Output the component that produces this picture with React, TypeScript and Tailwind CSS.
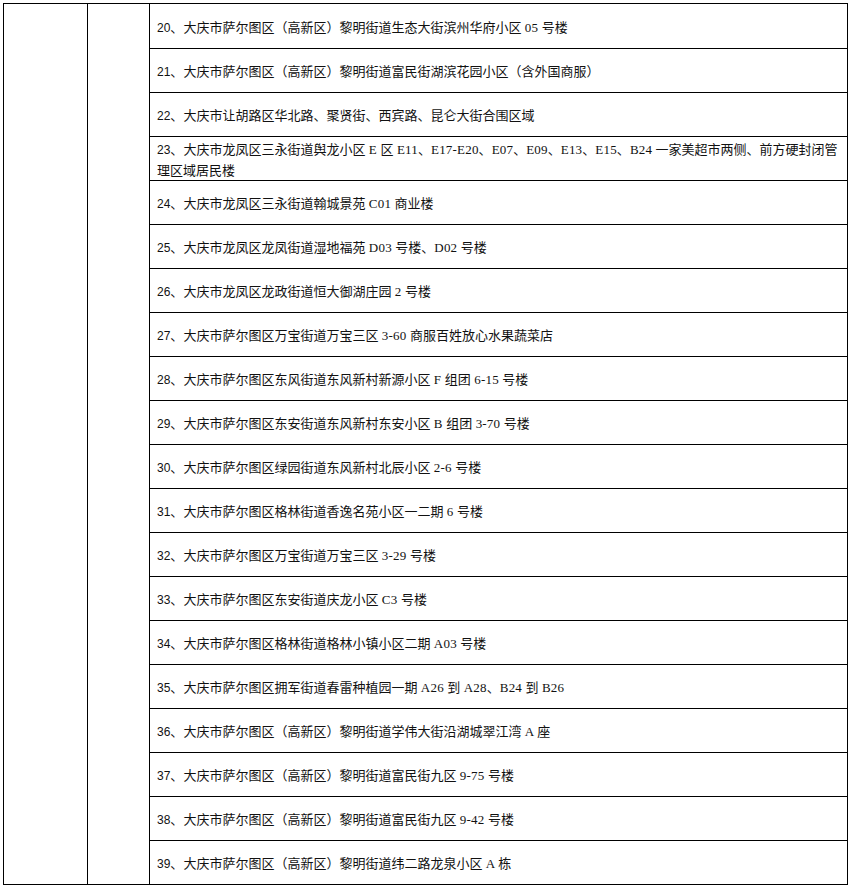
import React from "react";

type Seg = { t: string; l?: boolean };

const rows: { n: string; segs: Seg[] }[] = [
  { n: "20", segs: [{ t: "大庆市萨尔图区（高新区）黎明街道生态大街滨州华府小区" }, { t: " 05 ", l: true }, { t: "号楼" }] },
  { n: "21", segs: [{ t: "大庆市萨尔图区（高新区）黎明街道富民街湖滨花园小区（含外国商服）" }] },
  { n: "22", segs: [{ t: "大庆市让胡路区华北路、聚贤街、西宾路、昆仑大街合围区域" }] },
  {
    n: "23",
    segs: [
      { t: "大庆市龙凤区三永街道舆龙小区" },
      { t: " E ", l: true },
      { t: "区" },
      { t: " E11", l: true },
      { t: "、" },
      { t: "E17-E20", l: true },
      { t: "、" },
      { t: "E07", l: true },
      { t: "、" },
      { t: "E09", l: true },
      { t: "、" },
      { t: "E13", l: true },
      { t: "、" },
      { t: "E15", l: true },
      { t: "、" },
      { t: "B24 ", l: true },
      { t: "一家美超市两侧、前方硬封闭管" },
      { t: "\n" },
      { t: "理区域居民楼" },
    ],
  },
  { n: "24", segs: [{ t: "大庆市龙凤区三永街道翰城景苑" }, { t: " C01 ", l: true }, { t: "商业楼" }] },
  { n: "25", segs: [{ t: "大庆市龙凤区龙凤街道湿地福苑" }, { t: " D03 ", l: true }, { t: "号楼、" }, { t: "D02 ", l: true }, { t: "号楼" }] },
  { n: "26", segs: [{ t: "大庆市龙凤区龙政街道恒大御湖庄园" }, { t: " 2 ", l: true }, { t: "号楼" }] },
  { n: "27", segs: [{ t: "大庆市萨尔图区万宝街道万宝三区" }, { t: " 3-60 ", l: true }, { t: "商服百姓放心水果蔬菜店" }] },
  { n: "28", segs: [{ t: "大庆市萨尔图区东风街道东风新村新源小区" }, { t: " F ", l: true }, { t: "组团" }, { t: " 6-15 ", l: true }, { t: "号楼" }] },
  { n: "29", segs: [{ t: "大庆市萨尔图区东安街道东风新村东安小区" }, { t: " B ", l: true }, { t: "组团" }, { t: " 3-70 ", l: true }, { t: "号楼" }] },
  { n: "30", segs: [{ t: "大庆市萨尔图区绿园街道东风新村北辰小区" }, { t: " 2-6 ", l: true }, { t: "号楼" }] },
  { n: "31", segs: [{ t: "大庆市萨尔图区格林街道香逸名苑小区一二期" }, { t: " 6 ", l: true }, { t: "号楼" }] },
  { n: "32", segs: [{ t: "大庆市萨尔图区万宝街道万宝三区" }, { t: " 3-29 ", l: true }, { t: "号楼" }] },
  { n: "33", segs: [{ t: "大庆市萨尔图区东安街道庆龙小区" }, { t: " C3 ", l: true }, { t: "号楼" }] },
  { n: "34", segs: [{ t: "大庆市萨尔图区格林街道格林小镇小区二期" }, { t: " A03 ", l: true }, { t: "号楼" }] },
  {
    n: "35",
    segs: [
      { t: "大庆市萨尔图区拥军街道春雷种植园一期" },
      { t: " A26 ", l: true },
      { t: "到" },
      { t: " A28", l: true },
      { t: "、" },
      { t: "B24 ", l: true },
      { t: "到" },
      { t: " B26", l: true },
    ],
  },
  { n: "36", segs: [{ t: "大庆市萨尔图区（高新区）黎明街道学伟大街沿湖城翠江湾" }, { t: " A ", l: true }, { t: "座" }] },
  { n: "37", segs: [{ t: "大庆市萨尔图区（高新区）黎明街道富民街九区" }, { t: " 9-75 ", l: true }, { t: "号楼" }] },
  { n: "38", segs: [{ t: "大庆市萨尔图区（高新区）黎明街道富民街九区" }, { t: " 9-42 ", l: true }, { t: "号楼" }] },
  { n: "39", segs: [{ t: "大庆市萨尔图区（高新区）黎明街道纬二路龙泉小区" }, { t: " A ", l: true }, { t: "栋" }] },
];

export default function App() {
  return (
    <div className="w-[852px] h-[891px] bg-white pt-[3px] pl-[3px]">
      <div className="flex w-[845px] border-l border-t border-black">
        <div className="w-[84px] border-r border-b border-black" />
        <div className="w-[62px] border-r border-b border-black" />
        <div className="flex w-[698px] flex-col border-r border-black">
          {rows.map((r, i) => (
            <div
              key={r.n}
              className={
                (i === 0 ? "h-[45px] " : "h-[44px] ") +
                "flex items-center border-b border-black pl-[7px] pt-[2px] text-[13px] leading-[20px] text-[#111]"
              }
              style={{ fontFamily: '"Noto Sans CJK SC", sans-serif' }}
            >
              <div className="whitespace-pre">
                <span className="text-[12px]" style={{ fontFamily: '"Liberation Sans", sans-serif' }}>
                  {r.n}
                </span>
                <span>、</span>
                {r.segs.map((s, j) =>
                  s.t === "\n" ? (
                    <br key={j} />
                  ) : s.l ? (
                    <span key={j} className="tracking-[0.2px]" style={{ fontFamily: '"Liberation Serif", serif' }}>
                      {s.t}
                    </span>
                  ) : (
                    <span key={j}>{s.t}</span>
                  )
                )}
              </div>
            </div>
          ))}
        </div>
      </div>
    </div>
  );
}
